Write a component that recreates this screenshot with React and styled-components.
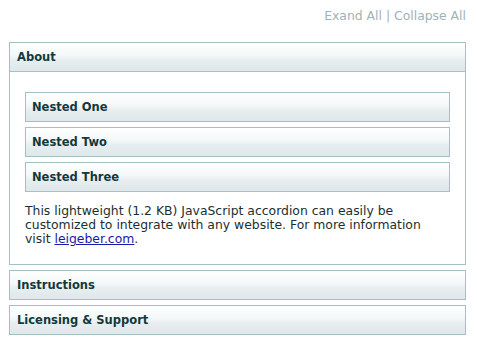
import React, { useState } from 'react';
import styled, { createGlobalStyle } from 'styled-components';

const GlobalStyle = createGlobalStyle`
    body {
        margin: 0;
        background: #fff;
        font-family: Verdana, "DejaVu Sans", sans-serif;
    }
`;

const Page = styled.div`
    width: 457px;
    padding: 8px 11px 0 9px;
`;

const Toolbar = styled.div`
    text-align: right;
    font-size: 12.4px;
    line-height: 16px;
    color: #9fb3b6;
    margin-bottom: 18px;

    span {
        cursor: pointer;
    }
`;

const Section = styled.div`
    border: 1px solid #a6bfc4;
    margin-bottom: 5px;
    background: #fff;
`;

const Header = styled.div`
    height: 28px;
    line-height: 28px;
    padding-left: ${(p) => p.$indent}px;
    font-size: 11.5px;
    font-weight: bold;
    color: #12393c;
    cursor: pointer;
    background: linear-gradient(to bottom, #ffffff 0%, #f4f7f8 45%, #e8eef0 60%, #dfe7ea 100%);
    border-bottom: ${(p) => (p.$open ? '1px solid #a6bfc4' : '0')};
`;

const Content = styled.div`
    padding: 20px 15px 18px 15px;
`;

const NestedList = styled.div`
    display: flex;
    flex-direction: column;
    gap: 5px;
    margin-bottom: 12px;
`;

const NestedItem = styled(Section)`
    margin-bottom: 0;
`;

const Text = styled.p`
    margin: 0;
    font-size: 12.4px;
    line-height: 14px;
    color: #1b2f33;

    a {
        color: #1a1aa6;
    }
`;

const nested = ['Nested One', 'Nested Two', 'Nested Three'];

export default function App() {
    const [open, setOpen] = useState({ about: true, instructions: false, licensing: false });

    const toggle = (key) => setOpen((o) => ({ ...o, [key]: !o[key] }));
    const setAll = (value) => setOpen({ about: value, instructions: value, licensing: value });

    return (
        <>
            <GlobalStyle />
            <Page>
                <Toolbar>
                    <span onClick={() => setAll(true)}>Exand All</span> | <span onClick={() => setAll(false)}>Collapse All</span>
                </Toolbar>

                <Section>
                    <Header $indent={7} $open={open.about} onClick={() => toggle('about')}>About</Header>
                    {open.about && (
                        <Content>
                            <NestedList>
                                {nested.map((title) => (
                                    <NestedItem key={title}>
                                        <Header $indent={6}>{title}</Header>
                                    </NestedItem>
                                ))}
                            </NestedList>
                            <Text>
                                This lightweight (1.2 KB) JavaScript accordion can easily be customized to integrate with any website. For more information visit <a href="#">leigeber.com</a>.
                            </Text>
                        </Content>
                    )}
                </Section>

                <Section>
                    <Header $indent={7} $open={open.instructions} onClick={() => toggle('instructions')}>Instructions</Header>
                </Section>

                <Section>
                    <Header $indent={7} $open={open.licensing} onClick={() => toggle('licensing')}>Licensing &amp; Support</Header>
                </Section>
            </Page>
        </>
    );
}
